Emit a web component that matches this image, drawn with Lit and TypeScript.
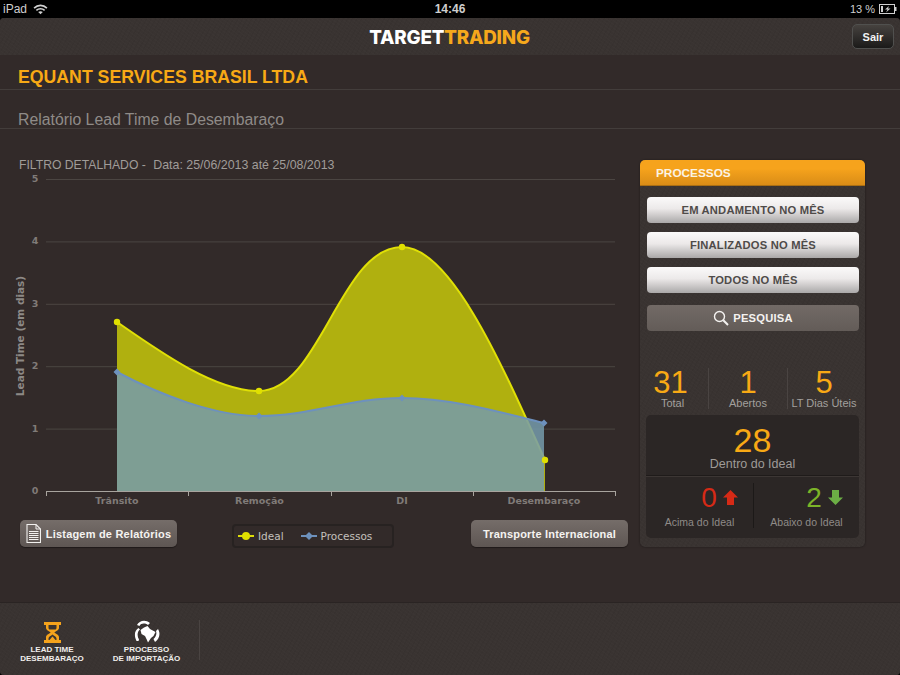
import { LitElement, html, css, svg } from "lit";
import { customElement } from "lit/decorators.js";

type Pt = [number, number];

// curves fitted to the chart, in page pixels
const idealLine = "M117,322 C160,352 215,391 259,391 C320,391 340,247 402,247 C450,247 500,360 545,460";
const procLine = "M117,372 C160,395 215,416 259,416 C310,416 350,398 402,398 C450,398 500,412 544,423";
const idealMarks: Pt[] = [[117, 322], [259, 391], [402, 247], [545, 460]];
const procMarks: Pt[] = [[117, 372], [259, 416], [402, 398], [544, 423]];
const yTicks = [5, 4, 3, 2, 1, 0].map((v) => ({ v, y: 491 - v * 62.4 }));
const categories = ["Trânsito", "Remoção", "DI", "Desembaraço"];
const xTicks = [46, 188, 331, 473, 615];

const docIcon = html`<svg class="doc" viewBox="0 0 15 19" width="15" height="19">
  <path d="M1 .5h9L14.500 5V18.500H1Z" fill="none" stroke="#f2f0ee" stroke-width="1.100" />
  <path d="M10 .5V5H14.500" fill="none" stroke="#f2f0ee" stroke-width="1" />
  <path d="M3 7.500h9.500M3 9.500h9.500M3 11.500h9.500M3 13.500h9.500M3 15.500h9.500" stroke="#f2f0ee" stroke-width="1" />
</svg>`;

const hourglass = html`<svg viewBox="0 0 19 21" width="19" height="21">
  <path d="M1 0H18V3H16V6C16 8.500 12 9.500 11.500 10.500C12 11.500 16 12.500 16 15V18H18V21H1V18H3V15C3 12.500 7 11.500 7.500 10.500C7 9.500 3 8.500 3 6V3H1Z" fill="#f5a31c" />
  <path d="M5.500 3H13.500V6C13.500 6.600 13.200 7 12.700 7.500H6.300C5.800 7 5.500 6.600 5.500 6Z" fill="#3a3431" />
  <path d="M9.500 12.500C11 13.800 13.500 14.500 13.500 16.500V18H5.500V16.500C5.500 14.500 8 13.800 9.500 12.500Z" fill="#3a3431" />
  <path d="M9.500 14.500L12.500 18H6.500Z" fill="#f5a31c" />
</svg>`;

const globe = html`<svg viewBox="0 0 26 23" width="26" height="23">
  <path d="M3 5C5 1 11 -1 16 3L14 5C11 3 7 3 5.500 6Z" fill="#fff" />
  <path d="M4.500 8C1 10 -0.500 15 2.500 21L4.500 21L5 19.500C3 16 3 12 6 9.500Z" fill="#fff" />
  <path d="M24 9C26.500 13 26 18 21 22L19.500 19C22 17 23 14 22 11Z" fill="#fff" />
  <path d="M6.500 10L10 7.500L13.500 6L16 9L21.500 12L19.500 16L17 18L14 22.500L12.500 19L11 16L7.500 14Z" fill="#fff" />
</svg>`;

@customElement("app-root")
export class AppRoot extends LitElement {
  static styles = css`
    :host {
      display: block;
      width: 900px;
      height: 675px;
      overflow: hidden;
      background: #000;
      font-family: "Liberation Sans", Arial, sans-serif;
      color: #fff;
    }
    .status {
      height: 18px;
      display: grid;
      grid-template-columns: 1fr auto 1fr;
      align-items: center;
      padding: 0 3px 0 3px;
      color: #cfcfcf;
      font-size: 12px;
    }
    .status-left {
      display: flex;
      align-items: center;
      gap: 6px;
    }
    .status-right {
      display: flex;
      justify-content: flex-end;
      align-items: center;
      gap: 4px;
      font-size: 11px;
    }
    .time {
      font-weight: bold;
      font-size: 12px;
    }
    .app {
      height: 657px;
      display: flex;
      flex-direction: column;
      background: #322a29;
      border-radius: 4px;
      overflow: hidden;
    }
    .textured {
      background-color: #393331;
      background-image:
        repeating-linear-gradient(37deg, rgba(255, 255, 255, 0.012) 0 1px, transparent 1px 3px),
        repeating-linear-gradient(-61deg, rgba(0, 0, 0, 0.035) 0 1px, transparent 1px 4px);
    }
    .topbar {
      height: 37px;
      flex: none;
      display: flex;
      align-items: center;
      justify-content: center;
      position: relative;
    }
    .logo {
      font-family: Inter, "Liberation Sans", sans-serif;
      font-weight: 800;
      font-size: 18.800px;
      letter-spacing: -0.2px;
      margin: 1px 1px 0 0;
    }
    .logo span {
      color: #f5a81c;
    }
    .sair {
      position: absolute;
      right: 6px;
      top: 6px;
      width: 42px;
      height: 25px;
      box-sizing: border-box;
      border: 1px solid #50504e;
      border-radius: 5px;
      background: linear-gradient(#46423f, #1b1a19);
      color: #f2f2f2;
      font: bold 11px "Liberation Sans", sans-serif;
      padding: 0;
    }
    .company {
      height: 35px;
      flex: none;
      box-sizing: border-box;
      padding: 12px 0 0 18px;
      border-bottom: 1px solid #433d3b;
      color: #f8a915;
      font-size: 17.700px;
      font-weight: bold;
      line-height: 20px;
    }
    .subtitle {
      height: 39px;
      flex: none;
      box-sizing: border-box;
      padding: 21px 0 0 18px;
      border-bottom: 1px solid #433d3b;
      color: #8f8b88;
      font-size: 15.800px;
      line-height: 17px;
    }
    .main {
      flex: 1;
      display: flex;
      padding-top: 28px;
    }
    .left {
      width: 640px;
      flex: none;
    }
    .filter {
      height: 15px;
      padding-left: 19px;
      line-height: 17px;
      font-size: 12.200px;
      color: #a09c99;
    }
    .filter span {
      margin-left: 4px;
      font-size: 12.400px;
    }
    .chart {
      display: block;
      margin-bottom: 8px;
    }
    .chart text {
      font-family: "DejaVu Sans", sans-serif;
      font-size: 9.500px;
      font-weight: bold;
      fill: #807b78;
    }
    .chart text.axis-title {
      font-size: 10.500px;
      fill: #8d8986;
    }
    .actions {
      display: flex;
      align-items: flex-start;
      padding: 0 12px 0 20px;
    }
    .action {
      height: 27px;
      width: 157px;
      box-sizing: border-box;
      border: 0;
      border-radius: 5px;
      padding: 0;
      background: linear-gradient(#756d69, #5e5653);
      box-shadow: 0 1px 1px rgba(0, 0, 0, 0.4);
      color: #f5f3f1;
      font: bold 11px "Liberation Sans", sans-serif;
      letter-spacing: 0.2px;
      display: flex;
      align-items: center;
      justify-content: center;
      gap: 5px;
    }
    .legend {
      margin: 4px 77px 0 55px;
      width: 162px;
      height: 24px;
      box-sizing: border-box;
      border: 2px solid #272221;
      border-radius: 4px;
      display: flex;
      align-items: center;
      padding-left: 4px;
      font-family: "DejaVu Sans", sans-serif;
      font-size: 10.500px;
      color: #c4c0bc;
    }
    .legend svg {
      margin-right: 4px;
    }
    .legend .second {
      margin-left: 17px;
    }
    .panel {
      margin-top: 3px;
      width: 225px;
      height: 387px;
      box-sizing: border-box;
      border-radius: 5px;
      box-shadow: 0 0 2px rgba(0, 0, 0, 0.5);
      display: flex;
      flex-direction: column;
    }
    .panel-head {
      height: 26px;
      flex: none;
      box-sizing: border-box;
      padding-left: 16px;
      border-radius: 5px 5px 0 0;
      border-bottom: 1px solid #a96e14;
      background: linear-gradient(#f6a31c 35%, #d98c17);
      font-size: 11.800px;
      font-weight: bold;
      line-height: 27px;
      color: #fbf3e4;
    }
    .buttons {
      display: flex;
      flex-direction: column;
      gap: 9px;
      padding: 11px 6px 0 7px;
    }
    .btn {
      height: 26px;
      border: 0;
      padding: 0;
      border-radius: 4px;
      background: linear-gradient(#fbfafa, #ece9e9 45%, #aaa8a8);
      color: #4f4b49;
      font: bold 11.200px "Liberation Sans", sans-serif;
      letter-spacing: 0.2px;
    }
    .btn.search {
      margin-top: 3px;
      background: #6d6561;
      background-image: linear-gradient(#726a66, #635c58);
      color: #f4f2f0;
      display: flex;
      align-items: center;
      justify-content: center;
      gap: 4px;
    }
    .stats {
      display: grid;
      grid-template-columns: 68px 79px 1fr;
      margin: 34px 5px 0 0;
      height: 50px;
    }
    .stat {
      text-align: center;
      border-left: 1px solid #4a4442;
      height: 41px;
      margin-top: 3px;
    }
    .stat:first-child {
      border-left: 0;
      padding-right: 3px;
    }
    .stat:first-child .big {
      padding-right: 4px;
    }
    .big {
      color: #f8a915;
      font-size: 31px;
      line-height: 29px;
      display: block;
    }
    .stat .cap {
      display: block;
      white-space: nowrap;
      font-size: 11px;
      line-height: 13px;
      color: #a3a09d;
    }
    .box {
      margin: 0 6px 0 6px;
      height: 123px;
      border-radius: 5px;
      background: #2b2625;
      display: flex;
      flex-direction: column;
    }
    .box-top {
      height: 61px;
      box-sizing: border-box;
      border-bottom: 1px solid #1f1b1a;
      box-shadow: 0 1px 0 #3c3634;
      text-align: center;
      padding-top: 9px;
    }
    .box-top .big {
      font-size: 34px;
      line-height: 33px;
    }
    .box-top .cap {
      display: block;
      font-size: 12.500px;
      line-height: 14px;
      color: #9f9b98;
    }
    .box-bottom {
      flex: 1;
      display: grid;
      grid-template-columns: 107px 1fr;
      padding-top: 7px;
    }
    .side {
      height: 45px;
      text-align: center;
    }
    .side + .side {
      border-left: 1px solid #1c1918;
    }
    .value {
      display: flex;
      justify-content: center;
      align-items: center;
      gap: 6px;
      height: 29px;
      font-size: 28px;
      padding-left: 40px;
    }
    .side + .side .value {
      padding-left: 36px;
    }
    .red {
      color: #d62a16;
    }
    .green {
      color: #7cb428;
    }
    .side .cap {
      display: block;
      font-size: 10.500px;
      line-height: 13px;
      margin-top: 4px;
      color: #8f8b88;
    }
    .footer {
      margin-top: auto;
      height: 73px;
      flex: none;
      box-sizing: border-box;
      border-top: 1px solid #2a2423;
      display: flex;
      align-items: flex-start;
      padding-top: 14px;
    }
    .nav {
      display: flex;
      flex-direction: column;
      align-items: center;
      justify-content: flex-end;
      font-size: 8px;
      line-height: 8.500px;
      font-weight: bold;
      color: #f0eeec;
      text-align: center;
      white-space: nowrap;
      height: 46px;
    }
    .nav svg {
      display: block;
      margin-bottom: 3px;
    }
    .nav.first {
      width: 66px;
      margin-left: 19px;
    }
    .nav.second {
      width: 70px;
      margin-left: 26.500px;
    }
    .divider {
      width: 1px;
      height: 40px;
      margin: 3px 0 0 17.500px;
      background: #4a4442;
    }
  `;

  renderChart() {
    const mid = (i: number) => (xTicks[i] + xTicks[i + 1]) / 2;
    return html`<svg class="chart" width="640" height="340" viewBox="0 172 640 340">
      ${yTicks.map(
        (t) => svg`
          ${t.v > 0 ? svg`<line x1="46" x2="615" y1=${t.y + 0.5} y2=${t.y + 0.5} stroke="#4b4542" />` : ""}
          <text x="35" y=${t.y + 3} text-anchor="middle">${t.v}</text>
        `
      )}
      <path d="${idealLine} L545,491 L117,491 Z" fill="#b0b00f" />
      <path d=${idealLine} fill="none" stroke="#e0e006" stroke-width="2" />
      <path d="${procLine} L544,491 L117,491 Z" fill="rgb(118, 155, 172)" fill-opacity="0.85" />
      <path d=${procLine} fill="none" stroke="#6d91bd" stroke-width="2" />
      ${idealMarks.map((p) => svg`<circle cx=${p[0]} cy=${p[1]} r="3.200" fill="#e0e000" />`)}
      ${procMarks.map(
        (p) => svg`<path d="M${p[0] - 3.500},${p[1]} L${p[0]},${p[1] - 3.500} L${p[0] + 3.500},${p[1]} L${p[0]},${p[1] + 3.500} Z" fill="#6d91bd" />`
      )}
      <line x1="46" x2="615" y1="491.500" y2="491.500" stroke="#a8a49e" />
      ${xTicks.map((x) => svg`<line x1=${x + 0.5} x2=${x + 0.5} y1="491" y2="496" stroke="#a8a49e" />`)}
      ${categories.map((c, i) => svg`<text x=${mid(i)} y="504" text-anchor="middle">${c}</text>`)}
      <text class="axis-title" transform="translate(24 336) rotate(-90)" text-anchor="middle">Lead Time (em dias)</text>
    </svg>`;
  }

  render() {
    return html`
      <div class="status">
        <div class="status-left">
          <span>iPad</span>
          <svg viewBox="0 0 16 12" width="15" height="11">
            <path d="M1 4.500C5 .5 11 .5 15 4.500M3.500 7C6 4.500 10 4.500 12.500 7" fill="none" stroke="#d0d0d0" stroke-width="1.700" />
            <path d="M5.500 8.800C7 7.500 9 7.500 10.500 8.800L8 11.300Z" fill="#d0d0d0" />
          </svg>
        </div>
        <span class="time">14:46</span>
        <div class="status-right">
          <span>13 %</span>
          <svg viewBox="0 0 18 10" width="18" height="10">
            <rect x=".5" y=".5" width="15" height="9" fill="none" stroke="#cfcfcf" />
            <rect x="16" y="3" width="1.500" height="4" fill="#cfcfcf" />
            <rect x="2" y="2" width="2" height="6" fill="#cfcfcf" />
            <path d="M10 2L6 5.500H8.500L7 8.500L11.500 4.500H9Z" fill="#cfcfcf" />
          </svg>
        </div>
      </div>
      <div class="app">
        <header class="topbar textured">
          <div class="logo">TARGET<span>TRADING</span></div>
          <button class="sair">Sair</button>
        </header>
        <div class="company">EQUANT SERVICES BRASIL LTDA</div>
        <div class="subtitle">Relatório Lead Time de Desembaraço</div>
        <div class="main">
          <section class="left">
            <div class="filter">FILTRO DETALHADO - <span>Data: 25/06/2013 até 25/08/2013</span></div>
            ${this.renderChart()}
            <div class="actions">
              <button class="action">${docIcon}Listagem de Relatórios</button>
              <div class="legend">
                <svg width="16" height="8" viewBox="0 0 16 8"><path d="M0 4H16" stroke="#dcdc08" stroke-width="2" /><circle cx="8" cy="4" r="4" fill="#e0e000" /></svg>
                Ideal
                <svg class="second" width="16" height="8" viewBox="0 0 16 8"><path d="M0 4H16" stroke="#6d91bd" stroke-width="2" /><path d="M4 4L8 0L12 4L8 8Z" fill="#6d91bd" /></svg>
                Processos
              </div>
              <button class="action">Transporte Internacional</button>
            </div>
          </section>
          <aside class="panel textured">
            <div class="panel-head">PROCESSOS</div>
            <div class="buttons">
              <button class="btn">EM ANDAMENTO NO MÊS</button>
              <button class="btn">FINALIZADOS NO MÊS</button>
              <button class="btn">TODOS NO MÊS</button>
              <button class="btn search">
                <svg viewBox="0 0 16 16" width="16" height="16">
                  <circle cx="6.500" cy="6.500" r="5" fill="none" stroke="#f4f2f0" stroke-width="1.400" />
                  <path d="M10.300 10.300L15 15" stroke="#f4f2f0" stroke-width="2" />
                </svg>
                PESQUISA
              </button>
            </div>
            <div class="stats">
              <div class="stat"><span class="big">31</span><span class="cap">Total</span></div>
              <div class="stat"><span class="big">1</span><span class="cap">Abertos</span></div>
              <div class="stat"><span class="big">5</span><span class="cap">LT Dias Úteis</span></div>
            </div>
            <div class="box">
              <div class="box-top"><span class="big">28</span><span class="cap">Dentro do Ideal</span></div>
              <div class="box-bottom">
                <div class="side">
                  <div class="value red">0
                    <svg width="15" height="15" viewBox="0 0 15 15"><path d="M7.500 0L15 7.500H11V15H4V7.500H0Z" fill="#d62a16" /></svg>
                  </div>
                  <span class="cap">Acima do Ideal</span>
                </div>
                <div class="side">
                  <div class="value green">2
                    <svg width="15" height="15" viewBox="0 0 15 15"><path d="M4 0H11V7.500H15L7.500 15L0 7.500H4Z" fill="#6cae45" /></svg>
                  </div>
                  <span class="cap">Abaixo do Ideal</span>
                </div>
              </div>
            </div>
          </aside>
        </div>
        <footer class="footer textured">
          <div class="nav first">${hourglass}<span>LEAD TIME<br />DESEMBARAÇO</span></div>
          <div class="nav second">${globe}<span>PROCESSO<br />DE IMPORTAÇÃO</span></div>
          <div class="divider"></div>
        </footer>
      </div>
    `;
  }
}
